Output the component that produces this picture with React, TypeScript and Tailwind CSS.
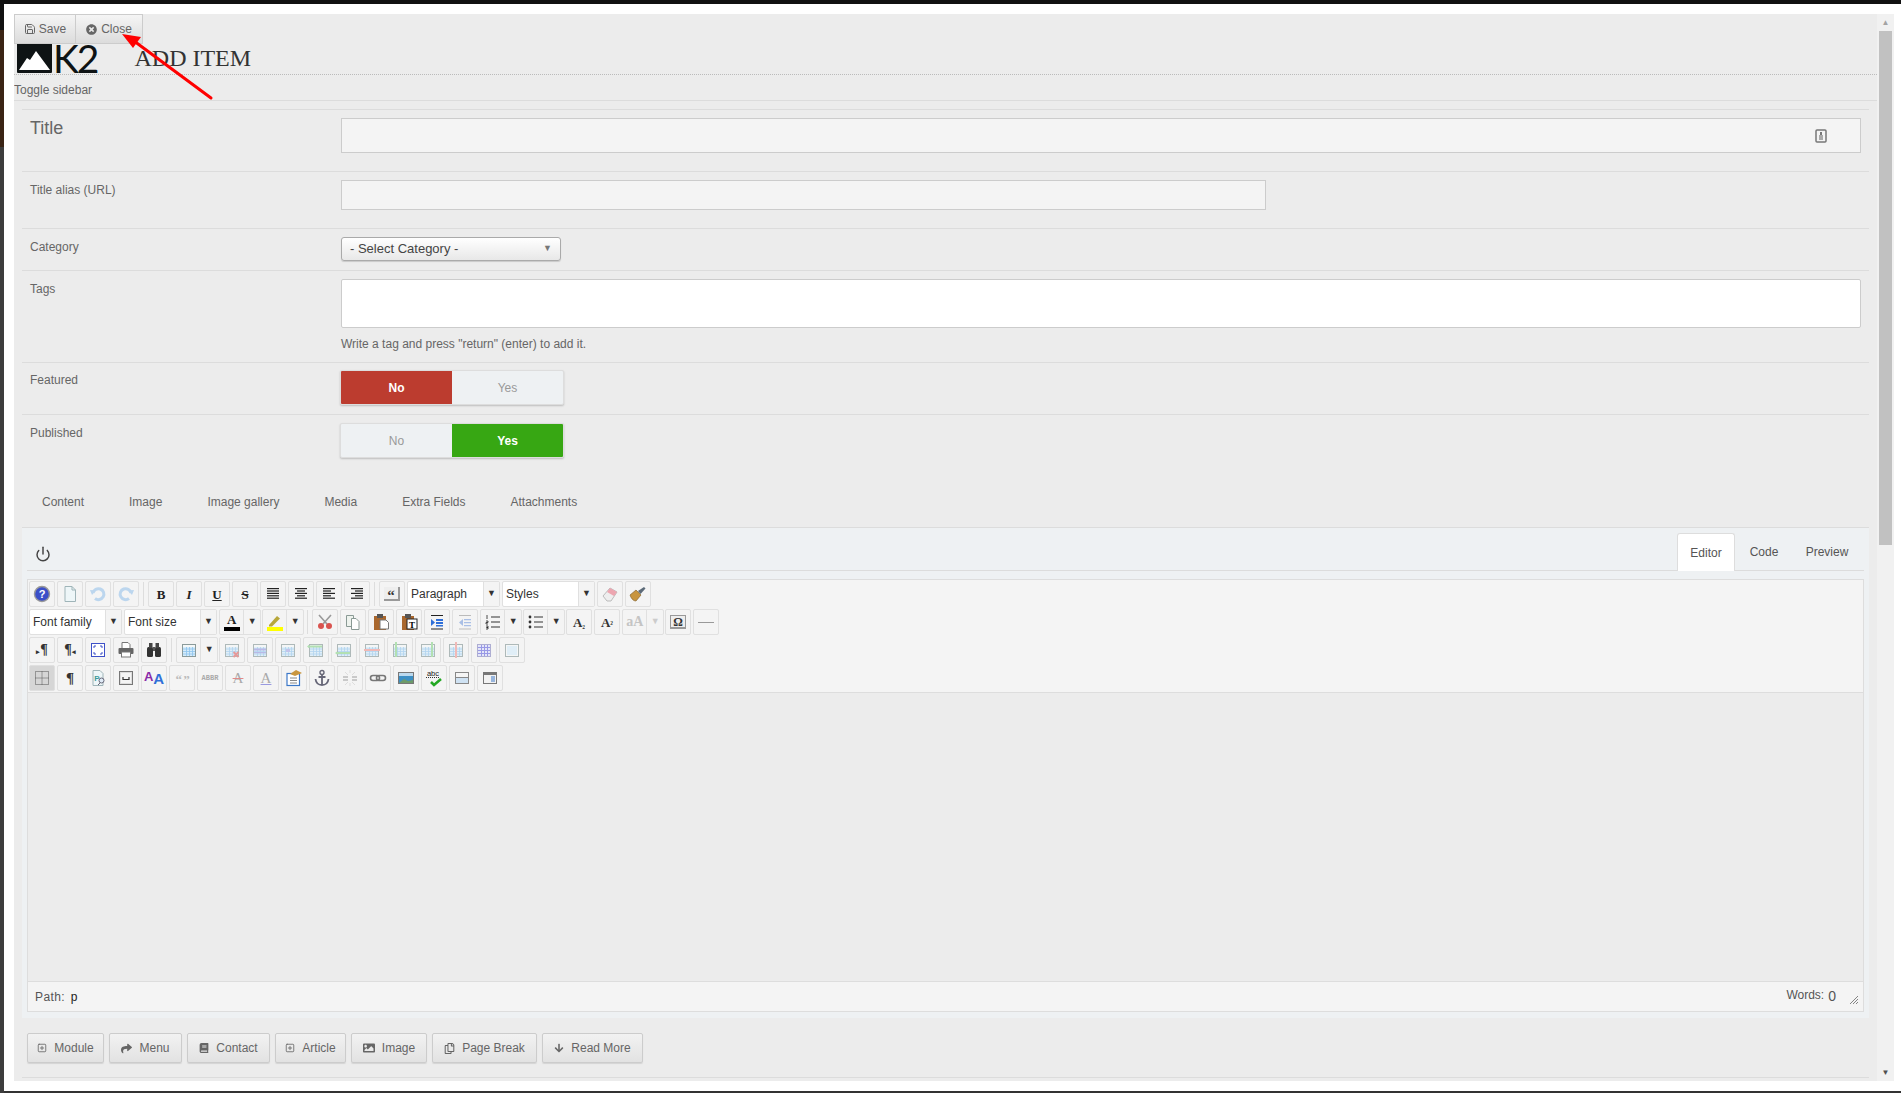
import React from "react";
import { Power, Save, SquarePlus } from "lucide-react";
import { FaArrowDown, FaBook, FaImage, FaRegCopy, FaShare, FaTimesCircle } from "react-icons/fa";

const Svg = ({ children }: { children: React.ReactNode }) => (
  <svg width="18" height="18" viewBox="0 0 18 18" fill="none">{children}</svg>
);

const Lines = ({ rows, color = "#222" }: { rows: number[][]; color?: string }) => (
  <Svg>
    {rows.map((r, i) => (
      <rect key={i} x={r[0]} y={3 + i * 2.4} width={r[1]} height="1.2" fill={color} />
    ))}
  </Svg>
);

const Letter = ({ t, className }: { t: string; className: string }) => (
  <span className={"font-['Liberation_Serif',serif] leading-none " + className}>{t}</span>
);

// table icon used by the table row, overlay is the only thing that differs
const TableIcon = ({ children, faded = true }: { children?: React.ReactNode; faded?: boolean }) => (
  <svg width="18" height="18" viewBox="0 0 18 18" fill="none" className={faded ? "opacity-65" : ""}>
    <rect x="2.5" y="3.5" width="13" height="12" fill="#d6ecfa" stroke="#8a9a9a" />
    <rect x="3" y="4" width="12" height="2" fill="#f4f8f8" />
    <path d="M3 8h12M3 10.5h12M3 13h12M6.5 6v9M9.5 6v9M12.5 6v9" stroke="#8ec4ee" strokeWidth="0.8" />
    {children}
  </svg>
);

const icons: Record<string, React.ReactNode> = {
  help: (
    <Svg>
      <circle cx="9" cy="9" r="7.5" fill="#3b4fc8" stroke="#999" strokeWidth="1.4" />
      <text x="9" y="13" textAnchor="middle" fontSize="11" fontWeight="700" fill="#fff" fontFamily="Liberation Sans">?</text>
    </Svg>
  ),
  newdoc: <Svg><path d="M4 1.5h7l3.5 3.5v11.5H4z" fill="#eef6f8" stroke="#9fb4b8" /><path d="M11 1.5V5h3.5" stroke="#9fb4b8" /></Svg>,
  undo: <Svg><path d="M4 8a5.5 5.5 0 1 1 2 5.5" stroke="#bcd6ee" strokeWidth="3" /><path d="M1 5l6 .5L3 10z" fill="#bcd6ee" /></Svg>,
  redo: <Svg><path d="M14 8a5.5 5.5 0 1 0-2 5.5" stroke="#bcd6ee" strokeWidth="3" /><path d="M17 5l-6 .5 4 4.5z" fill="#bcd6ee" /></Svg>,
  bold: <Letter t="B" className="text-[13px] font-bold text-[#222]" />,
  italic: <Letter t="I" className="text-[13px] italic font-bold text-[#222]" />,
  underline: <Letter t="U" className="text-[13px] font-bold text-[#222] underline" />,
  strike: <Letter t="S" className="text-[13px] font-bold text-[#222] line-through" />,
  full: <Lines rows={[[3, 12], [3, 12], [3, 12], [3, 12], [3, 12]]} />,
  center: <Lines rows={[[3, 12], [5, 8], [3, 12], [5, 8], [3, 12]]} />,
  left: <Lines rows={[[3, 12], [3, 8], [3, 12], [3, 8], [3, 12]]} />,
  right: <Lines rows={[[3, 12], [7, 8], [3, 12], [7, 8], [3, 12]]} />,
  quote: (
    <span className="flex h-[14px] w-[16px] items-center justify-center border-b-2 border-r-2 border-[#999] bg-[#eee] pt-[5px] font-['Liberation_Serif',serif] text-[15px] font-bold leading-none text-[#333]">“</span>
  ),
  eraser: <Svg><path d="M2 11l7-8 7 4-6 9H6z" fill="#eee" stroke="#bbb" /><path d="M9 3l7 4-3 4-7-4z" fill="#eda6b0" /></Svg>,
  brush: <Svg><path d="M1 10l6-5 5 5-5 6c-3 0-5-3-6-6z" fill="#c8953f" stroke="#7b5a28" strokeWidth="0.6" /><path d="M9 6l6-4 1.5 1.5-5 5.5z" fill="#5c6a78" /></Svg>,
  colorA: (
    <span className="flex flex-col items-center">
      <Letter t="A" className="text-[13px] font-bold text-[#222]" />
      <span className="mt-px h-[4px] w-[16px] bg-black" />
    </span>
  ),
  highlight: (
    <Svg><path d="M3 12l8-9 3 2.5-8 8H3z" fill="#b7a73a" /><rect x="1" y="14" width="16" height="4" fill="#ffff00" /></Svg>
  ),
  cut: <Svg><path d="M3 2l8 9M15 2L7 11" stroke="#999" strokeWidth="1.6" /><circle cx="5" cy="13" r="3" fill="#d9534f" /><circle cx="13" cy="13" r="3" fill="#d9534f" /></Svg>,
  copy: <Svg><path d="M2.5 2.5h7v11h-7z" fill="#eef3ee" stroke="#8a9a95" /><path d="M7.5 5.5H12l3 3v8H7.5z" fill="#fff" stroke="#8a9a95" /></Svg>,
  pasteDoc: <Svg><rect x="2" y="3" width="12" height="14" fill="#a9672d" /><rect x="5" y="1" width="6" height="4" fill="#555" /><path d="M8 7h6l2.5 2.5V16H8z" fill="#fff" stroke="#777" /></Svg>,
  pasteText: (
    <Svg>
      <rect x="2" y="3" width="12" height="14" fill="#a9672d" /><rect x="5" y="1" width="6" height="4" fill="#555" /><rect x="7" y="6" width="10" height="10" fill="#fff" stroke="#222" />
      <text x="12" y="14.5" textAnchor="middle" fontSize="9" fontWeight="700" fill="#000" fontFamily="Liberation Serif">T</text>
    </Svg>
  ),
  indent: <Svg><path d="M3 2.5h12M3 16h12" stroke="#222" strokeWidth="1.2" /><path d="M3 6l4 3.5-4 3.5z" fill="#2f6fd8" /><path d="M8 6h7v2H8zM8 9h7v2H8zM8 12h7v1.5H8z" fill="#2f6fd8" /></Svg>,
  outdent: <Svg><path d="M3 2.5h12M3 16h12" stroke="#bbb" strokeWidth="1.2" /><path d="M7 6L3 9.5 7 13z" fill="#a9bfe6" /><path d="M8 6h7v1.2H8zM8 9h7v1.2H8zM8 12h7v1.2H8z" fill="#a9bfe6" /></Svg>,
  numlist: <Svg><path d="M7 4h9M7 9h9M7 14h9" stroke="#333" strokeWidth="1.2" /><path d="M3 2v4M2 8h2v1.5H2V11h2M2 13h2v1.5H2.5 4V16H2" stroke="#222" strokeWidth="0.8" /></Svg>,
  bullist: <Svg><path d="M7 4h9M7 9h9M7 14h9" stroke="#333" strokeWidth="1.2" /><circle cx="3" cy="4" r="1.4" fill="#333" /><circle cx="3" cy="9" r="1.4" fill="#333" /><circle cx="3" cy="14" r="1.4" fill="#333" /></Svg>,
  sub: <span className="font-['Liberation_Serif',serif] text-[13px] font-bold leading-none text-[#333]">A<span className="text-[9px]">₂</span></span>,
  sup: <span className="font-['Liberation_Serif',serif] text-[13px] font-bold leading-none text-[#333]">A<span className="text-[9px]">²</span></span>,
  charcase: <span className="font-['Liberation_Serif',serif] text-[14px] font-bold leading-none text-[#c4c4c4]">aA</span>,
  omega: <span className="flex h-[14px] w-[16px] items-center justify-center border border-b-2 border-[#999] bg-[#eee] font-['Liberation_Serif',serif] text-[12px] font-bold leading-none text-[#333]">Ω</span>,
  hr: <span className="h-px w-[16px] bg-[#999]" />,
  ltr: <span className="font-['Liberation_Serif',serif] text-[14px] font-bold leading-none text-[#333]"><span className="text-[7px]">▸</span>¶</span>,
  rtl: <span className="font-['Liberation_Serif',serif] text-[14px] font-bold leading-none text-[#333]">¶<span className="text-[7px]">◂</span></span>,
  full2: <Svg><rect x="2.5" y="2.5" width="13" height="13" fill="#fff" stroke="#3d50c8" /><path d="M5 7V5h2M11 5h2v2M13 11v2h-2M7 13H5v-2" stroke="#3d50c8" /></Svg>,
  print: <Svg><path d="M5 7V1.5h6l2 2V7" fill="#fff" stroke="#777" /><rect x="1.5" y="7" width="15" height="6" rx="1" fill="#666" /><rect x="4.5" y="11" width="9" height="5" fill="#fff" stroke="#777" /></Svg>,
  search: <Svg><rect x="2" y="6" width="6" height="10" rx="1.5" fill="#333" /><rect x="10" y="6" width="6" height="10" rx="1.5" fill="#333" /><rect x="4" y="2" width="3.5" height="5" fill="#444" /><rect x="10.5" y="2" width="3.5" height="5" fill="#444" /><rect x="8" y="6" width="2" height="4" fill="#555" /></Svg>,
  table: <TableIcon faded={false} />,
  tDel: <TableIcon><path d="M10.5 11l5 5M15.5 11l-5 5" stroke="#e06a6a" strokeWidth="2" /></TableIcon>,
  tRowProps: <TableIcon><path d="M3 7.5h12v2H3zM3 11h12v1.2H3z" fill="#9a9ae0" /></TableIcon>,
  tCell: <TableIcon><rect x="7" y="8" width="4" height="3" fill="#a9a9e6" /></TableIcon>,
  tRowBefore: <TableIcon><rect x="1" y="4.5" width="14" height="2" fill="#8fd68f" /><path d="M0 5.5l2-1.5v3z" fill="#8fd68f" /></TableIcon>,
  tRowAfter: <TableIcon><rect x="1" y="11" width="14" height="2" fill="#8fd68f" /><path d="M0 12l2-1.5v3z" fill="#8fd68f" /></TableIcon>,
  tRowDel: <TableIcon><rect x="1" y="8" width="16" height="2" fill="#ee9a98" /></TableIcon>,
  tColBefore: <TableIcon><rect x="4" y="1" width="2" height="15" fill="#8fd68f" /></TableIcon>,
  tColAfter: <TableIcon><rect x="12" y="1" width="2" height="15" fill="#8fd68f" /></TableIcon>,
  tColDel: <TableIcon><rect x="8" y="1" width="2" height="16" fill="#ee9a98" /></TableIcon>,
  tSplit: (
    <svg width="18" height="18" viewBox="0 0 18 18" fill="none" className="opacity-65">
      <rect x="2.5" y="3.5" width="13" height="12" fill="#dde0fb" stroke="#8a8ac0" />
      <path d="M3 6.5h12M3 9.5h12M3 12.5h12M6.5 4v11M9.5 4v11M12.5 4v11" stroke="#6a6ae0" />
    </svg>
  ),
  tMerge: (
    <svg width="18" height="18" viewBox="0 0 18 18" fill="none" className="opacity-65">
      <rect x="2.5" y="3.5" width="13" height="12" fill="#f4f8f8" stroke="#8a9a9a" />
      <rect x="4" y="5" width="10" height="9" fill="#d6ecfa" />
    </svg>
  ),
  visual: <svg width="18" height="18" viewBox="0 0 18 18"><path d="M2.5 2.5h13v13h-13zM9 2.5v13M2.5 9h13" stroke="#555" strokeDasharray="1 1" fill="none" /></svg>,
  pilcrow: <span className="font-['Liberation_Serif',serif] text-[15px] font-bold leading-none text-[#333]">¶</span>,
  preview: <Svg><path d="M4 1.5h7l3 3v12H4z" fill="#eef6f8" stroke="#9fb4b8" /><text x="8" y="12" fontSize="8" fontWeight="700" fill="#3c9a9a" fontFamily="Liberation Sans" textAnchor="middle">P</text><circle cx="12.5" cy="11.5" r="2.5" fill="#dfeaf6" stroke="#667" /><path d="M11 14l-2 2" stroke="#667" /></Svg>,
  pagebreak: <Svg><rect x="2.5" y="2.5" width="13" height="13" fill="#ddd" stroke="#777" /><rect x="4" y="4" width="10" height="10" fill="#f5f5f5" /><path d="M6 8v2.5h6V8" stroke="#333" strokeWidth="1.2" /></Svg>,
  style: <span className="relative block h-[16px] w-[20px] font-['Liberation_Sans',sans-serif] font-bold leading-none"><span className="absolute left-0 top-0 text-[13px] text-[#8a2aa8]">A</span><span className="absolute bottom-0 right-0 text-[15px] text-[#2f6fd8]">A</span></span>,
  cite: <span className="pt-[3px] font-['Liberation_Serif',serif] text-[13px] font-bold leading-none tracking-[-1px] text-[#bbb]">“ ”</span>,
  abbr: <span className="font-['Liberation_Mono',monospace] text-[7px] font-bold leading-none text-[#aaa]">ABBR</span>,
  del: <span className="font-['Liberation_Serif',serif] text-[15px] leading-none text-[#aaa] line-through decoration-[#e08a8a]">A</span>,
  ins: <span className="font-['Liberation_Serif',serif] text-[15px] leading-none text-[#aaa] underline decoration-[#9a9ae0]">A</span>,
  template: <Svg><rect x="2" y="4.5" width="12.5" height="12" fill="#fff" stroke="#3c78c8" strokeWidth="1.2" /><path d="M5 9h7M5 11.5h7M5 14h7" stroke="#888" /><path d="M5 5l6-4 6 3-7 3z" fill="#c9963f" /></Svg>,
  anchor: <Svg><circle cx="9" cy="3.5" r="2" stroke="#667" strokeWidth="1.4" /><path d="M9 5.5V16M5.5 8h7M2.5 10c.5 4 3 6 6.5 6s6-2 6.5-6" stroke="#667" strokeWidth="1.8" /></Svg>,
  unlink: <Svg><path d="M2 8h5M2 11h5M11 8h5M11 11h5" stroke="#bbb" strokeWidth="1.4" /><path d="M4 3l3 3M14 3l-3 3M4 16l3-3M14 16l-3-3M9 1v3M9 14v3" stroke="#ddd" /></Svg>,
  link: <Svg><rect x="1.5" y="6.5" width="9" height="5" rx="2.5" stroke="#777" strokeWidth="1.6" /><rect x="7.5" y="6.5" width="9" height="5" rx="2.5" stroke="#777" strokeWidth="1.6" /></Svg>,
  image: <Svg><rect x="1.5" y="3.5" width="15" height="11" fill="#3d8fc4" stroke="#777" /><path d="M2 14l5-4 4 2 5-1v3z" fill="#6d9a6a" /><rect x="2" y="4" width="14" height="3" fill="#bcd9ee" /></Svg>,
  spell: (
    <Svg>
      <text x="8" y="6.5" textAnchor="middle" fontSize="7.5" fill="#222" fontFamily="Liberation Sans">abc</text>
      <path d="M1 8.5h14" stroke="#333" strokeDasharray="1 1" />
      <path d="M6 13l3 3 7-6" stroke="#23a823" strokeWidth="2.6" />
    </Svg>
  ),
  split: <Svg><rect x="2.5" y="3.5" width="13" height="11" fill="#cfe2f3" stroke="#888" /><rect x="3" y="4" width="12" height="4.5" fill="#f5f5f5" /><path d="M2.5 8.5h13" stroke="#888" /></Svg>,
  layer: <Svg><rect x="2.5" y="3.5" width="13" height="11" fill="#f2f2f2" stroke="#777" /><rect x="3" y="4" width="12" height="2" fill="#777" /><path d="M10 8h4M10 10h4M10 12h4" stroke="#3c78c8" /></Svg>,
};

const Btn = ({ icon, active }: { icon: string; active?: boolean }) => (
  <div className={"mr-[2px] flex h-[26px] w-[26px] shrink-0 items-center justify-center rounded-[2px] border border-[#e0e0e0] " + (active ? "bg-[#d6d6d6]" : "bg-[#f4f4f4]")}>
    {icons[icon]}
  </div>
);

const Arrow = ({ dim }: { dim?: boolean }) => (
  <span className={"flex w-[16px] items-center justify-center text-[9px] " + (dim ? "text-[#ccc]" : "text-[#333]")}>▼</span>
);

const SplitBtn = ({ icon, dim }: { icon: string; dim?: boolean }) => (
  <div className="mr-[1px] flex h-[26px] w-[42px] shrink-0 rounded-[2px] border border-[#e0e0e0] bg-[#f4f4f4]">
    <span className="flex w-[25px] items-center justify-center border-r border-[#e0e0e0]">{icons[icon]}</span>
    <Arrow dim={dim} />
  </div>
);

const ListBox = ({ label }: { label: string }) => (
  <div className="mr-[2px] flex h-[26px] w-[93px] shrink-0 rounded-[2px] border border-[#e0e0e0] bg-white text-[12px] text-[#333]">
    <span className="flex flex-1 items-center pl-[3px]">{label}</span>
    <span className="flex w-[16px] items-center justify-center border-l border-[#e0e0e0] bg-[#f4f4f4] text-[9px] text-[#333]">▼</span>
  </div>
);

const Sep = () => <div className="ml-[2px] mr-[4px] h-[24px] w-px shrink-0 bg-[#ddd]" />;

const ToolRow = ({ children }: { children: React.ReactNode }) => (
  <div className="mb-[2px] flex items-center last:mb-[1px]">{children}</div>
);

const Row = ({ label, labelClass, className, children }: { label: string; labelClass?: string; className: string; children: React.ReactNode }) => (
  <div className={"flex border-t border-[#dcdcdc] " + className}>
    <div className={"w-[319px] shrink-0 pl-2 text-[#666] " + (labelClass || "text-[12px]")}>{label}</div>
    <div className="min-w-0 flex-1">{children}</div>
  </div>
);

const Toggle = ({ value }: { value: "No" | "Yes" }) => (
  <div className="-ml-px flex h-[35px] w-[224px] overflow-hidden rounded-[2px] border border-[#ddd] bg-[#eef1f3] text-[12px] shadow-[0_1px_2px_rgba(0,0,0,0.2)]">
    <span className={"flex flex-1 items-center justify-center " + (value === "No" ? "bg-[#bc3c2f] font-bold text-white" : "text-[#999]")}>No</span>
    <span className={"flex flex-1 items-center justify-center " + (value === "Yes" ? "bg-[#37a713] font-bold text-white" : "text-[#999]")}>Yes</span>
  </div>
);

const FootBtn = ({ icon, label, w }: { icon: React.ReactNode; label: string; w: string }) => (
  <div className={"flex h-[30px] items-center justify-center gap-[7px] rounded-[2px] border border-[#ccc] bg-gradient-to-b from-[#f2f2f2] to-[#e2e2e2] text-[12px] text-[#666] shadow-[0_1px_1px_rgba(0,0,0,0.1)] " + w}>
    {icon}
    <span>{label}</span>
  </div>
);

export default function App() {
  return (
    <div className="flex h-screen w-full flex-col overflow-hidden bg-[#333] font-['Liberation_Sans',Arial,sans-serif]">
      <div className="h-[4px] w-full shrink-0 bg-[#111]" />
      <div className="flex min-h-0 flex-1">
        <div className="flex w-[4px] shrink-0 flex-col">
          <div className="h-[26px] bg-[#111]" />
          <div className="h-[117px] bg-[#3a2415]" />
          <div className="flex-1 bg-[#3d3d3d]" />
        </div>
        <div className="mb-[2px] min-w-0 flex-1 bg-white pb-[10px] pl-[10px] pr-[7px] pt-[10px]">
          <div className="relative flex h-full overflow-hidden bg-[#ececec]">
            <div className="min-w-0 flex-1">
              {/* top toolbar sits right on top of the logo */}
              <div className="relative z-10 flex h-[30px]">
                <div className="flex w-[62px] items-center justify-center gap-[3px] border border-[#ccc] bg-gradient-to-b from-[#f5f5f5] to-[#dcdcdc] text-[12px] text-[#666]">
                  <Save size={12} strokeWidth={2} />
                  <span>Save</span>
                </div>
                <div className="flex w-[67px] items-center justify-center gap-[4px] border border-l-0 border-[#ccc] bg-gradient-to-b from-[#f5f5f5] to-[#dcdcdc] text-[12px] text-[#666]">
                  <FaTimesCircle size={11} />
                  <span>Close</span>
                </div>
              </div>
              <div className="-mt-[2px] flex h-[33px] items-center border-b border-dotted border-[#bbb] pl-[3px]">
                <svg width="35" height="30" viewBox="0 0 35 30" className="shrink-0">
                  <rect width="35" height="30" rx="1" fill="#0e1314" />
                  <path d="M2 27L10 15l3 2 6-9 14 19z" fill="#fff" />
                </svg>
                <span className="ml-[1px] font-['Lato',sans-serif] text-[39px] font-normal leading-[30px] tracking-[-2px] text-[#0e1314]">K2</span>
                <span className="ml-[37px] font-['Liberation_Serif',serif] text-[24px] leading-none text-[#333]">ADD ITEM</span>
              </div>
              <div className="flex h-[26px] items-center border-b border-[#dcdcdc] pt-[5px] text-[12px] text-[#666]">Toggle sidebar</div>

              <div className="px-[8px] pt-[8px]">
                <Row label="Title" labelClass="text-[18px] leading-[20px]" className="h-[62px] pt-[8px]">
                  <div className="mr-[8px] flex h-[35px] items-center justify-end border border-[#ccc] bg-[#f4f4f4] pr-[33px]">
                    <svg width="12" height="14" viewBox="0 0 12 14" fill="none">
                      <rect x="1" y="1" width="10" height="12" rx="1" stroke="#777" strokeWidth="1.5" />
                      <rect x="4" y="6" width="4" height="5" fill="#aaa" />
                      <rect x="5" y="3" width="2" height="3" fill="#777" />
                    </svg>
                  </div>
                </Row>
                <Row label="Title alias (URL)" labelClass="text-[12px] pt-[1px]" className="h-[57px] pt-[8px]">
                  <div className="h-[30px] w-[925px] border border-[#ccc] bg-[#f4f4f4]" />
                </Row>
                <Row label="Category" labelClass="text-[12px] pt-[1px]" className="h-[42px] pt-[8px]">
                  <div className="flex h-[24px] w-[220px] items-center justify-between rounded-[3px] border border-[#aaa] bg-gradient-to-b from-white to-[#e8e8e8] px-[8px] text-[13px] text-[#444] shadow-[0_1px_1px_rgba(0,0,0,0.15)]">
                    <span>- Select Category -</span>
                    <span className="text-[9px] text-[#777]">▼</span>
                  </div>
                </Row>
                <Row label="Tags" labelClass="text-[12px] pt-[1px]" className="h-[92px] pt-[8px]">
                  <div className="mr-[8px] h-[49px] rounded-[2px] border border-[#ccc] bg-white" />
                  <p className="mt-[9px] text-[12px] leading-[14px] text-[#666]">Write a tag and press "return" (enter) to add it.</p>
                </Row>
                <Row label="Featured" labelClass="text-[12px] pt-[1px]" className="h-[52px] pt-[7px]">
                  <Toggle value="No" />
                </Row>
                <Row label="Published" labelClass="text-[12px] pt-[1px]" className="h-[53px] pt-[8px]">
                  <Toggle value="Yes" />
                </Row>

                <div className="-mt-px flex h-[61px] items-end gap-[45px] pb-[18px] pl-[20px] text-[12px] leading-[14px] text-[#666]">
                  <span>Content</span>
                  <span>Image</span>
                  <span>Image gallery</span>
                  <span>Media</span>
                  <span>Extra Fields</span>
                  <span>Attachments</span>
                </div>

                <div className="border-t border-[#dcdcdc] bg-[#eef1f3] px-[5px] pb-[6px]">
                  <div className="flex h-[43px] items-end justify-between border-b border-[#dcdcdc]">
                    <Power size={16} strokeWidth={2.2} className="mb-[8px] ml-[8px] text-[#444]" />
                    <div className="-mb-px mr-[3px] flex items-end text-[12px] text-[#555]">
                      <span className="flex h-[38px] w-[58px] items-center justify-center rounded-t-[3px] border border-b-0 border-[#ddd] bg-white">Editor</span>
                      <span className="flex h-[38px] w-[58px] items-center justify-center">Code</span>
                      <span className="flex h-[38px] w-[68px] items-center justify-center">Preview</span>
                    </div>
                  </div>
                  <div className="mt-[8px] border border-[#ddd] bg-[#f4f4f4]">
                    <div className="border-b border-[#ddd] pl-[1px] pt-[1px]">
                      <ToolRow>
                        <Btn icon="help" /><Btn icon="newdoc" /><Btn icon="undo" /><Btn icon="redo" /><Sep />
                        <Btn icon="bold" /><Btn icon="italic" /><Btn icon="underline" /><Btn icon="strike" />
                        <Btn icon="full" /><Btn icon="center" /><Btn icon="left" /><Btn icon="right" /><Sep />
                        <Btn icon="quote" /><ListBox label="Paragraph" /><ListBox label="Styles" />
                        <Btn icon="eraser" /><Btn icon="brush" />
                      </ToolRow>
                      <ToolRow>
                        <ListBox label="Font family" /><ListBox label="Font size" />
                        <SplitBtn icon="colorA" /><SplitBtn icon="highlight" /><Sep />
                        <Btn icon="cut" /><Btn icon="copy" /><Btn icon="pasteDoc" /><Btn icon="pasteText" />
                        <Btn icon="indent" /><Btn icon="outdent" />
                        <SplitBtn icon="numlist" /><SplitBtn icon="bullist" />
                        <Btn icon="sub" /><Btn icon="sup" />
                        <SplitBtn icon="charcase" dim /><Btn icon="omega" /><Btn icon="hr" />
                      </ToolRow>
                      <ToolRow>
                        <Btn icon="ltr" /><Btn icon="rtl" /><Btn icon="full2" /><Btn icon="print" /><Btn icon="search" /><Sep />
                        <SplitBtn icon="table" />
                        <Btn icon="tDel" /><Btn icon="tRowProps" /><Btn icon="tCell" /><Btn icon="tRowBefore" /><Btn icon="tRowAfter" /><Btn icon="tRowDel" />
                        <Btn icon="tColBefore" /><Btn icon="tColAfter" /><Btn icon="tColDel" /><Btn icon="tSplit" /><Btn icon="tMerge" />
                      </ToolRow>
                      <ToolRow>
                        <Btn icon="visual" active /><Btn icon="pilcrow" /><Btn icon="preview" /><Btn icon="pagebreak" /><Btn icon="style" />
                        <Btn icon="cite" /><Btn icon="abbr" /><Btn icon="del" /><Btn icon="ins" /><Btn icon="template" /><Btn icon="anchor" />
                        <Btn icon="unlink" /><Btn icon="link" /><Btn icon="image" /><Btn icon="spell" /><Btn icon="split" /><Btn icon="layer" />
                      </ToolRow>
                    </div>
                    <div className="h-[288px] bg-[#ececec]" />
                    <div className="flex h-[30px] items-center justify-between border-t border-[#ddd] pl-[7px] pr-[4px] text-[12px] text-[#555]">
                      <span className="tracking-[0.4px]">Path: <span className="ml-[2px] text-[#222]">p</span></span>
                      <div className="flex items-center gap-[13px]">
                        <span className="flex items-center gap-[4px]"><span className="-mt-[3px]">Words:</span><span className="text-[14px]">0</span></span>
                        <svg width="10" height="10" viewBox="0 0 10 10" className="mt-[6px]">
                          <path d="M1 9l8-8M4 9l5-5M7 9l2-2" stroke="#777" strokeWidth="0.9" />
                        </svg>
                      </div>
                    </div>
                  </div>
                </div>

                <div className="flex gap-[5px] pb-[14px] pl-[5px] pt-[15px]">
                  <FootBtn w="w-[77px]" label="Module" icon={<SquarePlus size={10} />} />
                  <FootBtn w="w-[73px]" label="Menu" icon={<FaShare size={11} />} />
                  <FootBtn w="w-[83px]" label="Contact" icon={<FaBook size={10} />} />
                  <FootBtn w="w-[71px]" label="Article" icon={<SquarePlus size={10} />} />
                  <FootBtn w="w-[76px]" label="Image" icon={<FaImage size={12} />} />
                  <FootBtn w="w-[105px]" label="Page Break" icon={<FaRegCopy size={11} />} />
                  <FootBtn w="w-[101px]" label="Read More" icon={<FaArrowDown size={10} />} />
                </div>
                <div className="border-t border-[#dcdcdc]" />
              </div>
            </div>

            {/* browser scrollbar of the framed page */}
            <div className="flex w-[17px] shrink-0 flex-col bg-[#f1f1f1]">
              <div className="flex h-[17px] items-center justify-center text-[8px] leading-none text-[#a3a3a3]">▲</div>
              <div className="mx-[2px] h-[514px] bg-[#c1c1c1]" />
              <div className="flex-1" />
              <div className="flex h-[17px] items-center justify-center text-[8px] leading-none text-[#505050]">▼</div>
            </div>

            {/* the red annotation arrow drawn on the screenshot */}
            <svg width="120" height="80" viewBox="0 0 120 80" className="absolute left-[98px] top-[15px] z-20">
              <path d="M99 69L22 12" stroke="#f00" strokeWidth="3" strokeLinecap="round" />
              <path d="M10 5l19 3-8 11z" fill="#f00" />
            </svg>
          </div>
        </div>
      </div>
    </div>
  );
}
